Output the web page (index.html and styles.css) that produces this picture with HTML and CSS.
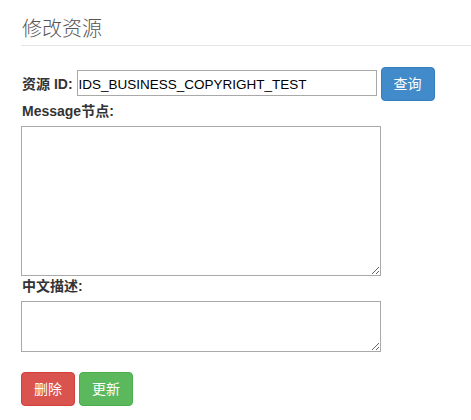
FILE: index.html
```html
<!DOCTYPE html>
<html lang="zh-CN">
<head>
<meta charset="utf-8">
<title>修改资源</title>
<link rel="stylesheet" href="styles.css">
</head>
<body>
<div class="page">
  <h3 class="page-title">修改资源</h3>
  <div class="query-row">
    <label class="inline-label" for="rid">资源 ID:</label>
    <input id="rid" class="id-input" type="text" value="IDS_BUSINESS_COPYRIGHT_TEST">
    <button class="btn btn-primary" type="button">查询</button>
  </div>
  <label class="block-label" for="msg">Message节点:</label>
  <textarea id="msg" class="area area-tall"></textarea>
  <label class="block-label serif-label" for="desc">中文描述:</label>
  <textarea id="desc" class="area area-short"></textarea>
  <div class="actions">
    <button class="btn btn-danger" type="button">删除</button>
    <button class="btn btn-success" type="button">更新</button>
  </div>
</div>
</body>
</html>
```

FILE: styles.css
```css
html, body {
  margin: 0;
  padding: 0;
  background: #fff;
}
body {
  font-family: "Liberation Sans", Arial, "Noto Sans CJK SC", sans-serif;
  font-size: 14px;
  line-height: 20px;
  color: #333;
}
.page {
  padding-left: 21px;
}
.page-title {
  margin: 0;
  padding: 17px 0 6px 1px;
  font-family: "Noto Sans CJK SC", sans-serif;
  font-size: 20px;
  line-height: 22px;
  font-weight: 300;
  color: #555;
  border-bottom: 1px solid #e5e5e5;
}
.query-row {
  display: flex;
  align-items: flex-start;
  margin-top: 21px;
  height: 34px;
}
.inline-label {
  font-weight: bold;
  margin: 7px 4px 0 1px;
  line-height: 20px;
}
.id-input {
  box-sizing: border-box;
  width: 300px;
  height: 26px;
  margin: 3px 4px 0 0;
  padding: 2px 1px 0 1px;
  border: 1px solid #a9a9a9;
  font-family: "Liberation Sans", Arial, sans-serif;
  font-size: 13.5px;
  color: #000;
  outline: none;
}
.btn {
  box-sizing: border-box;
  height: 34px;
  padding: 6px 12px;
  border: 1px solid transparent;
  border-radius: 4px;
  font-family: "Liberation Sans", Arial, "Noto Sans CJK SC", sans-serif;
  font-size: 14px;
  line-height: 20px;
  color: #fff;
  cursor: pointer;
}
.btn-primary {
  background: #428bca;
  border-color: #357ebd;
}
.btn-danger {
  background: #d9534f;
  border-color: #d43f3a;
}
.btn-success {
  background: #5cb85c;
  border-color: #4cae4c;
}
.block-label {
  display: block;
  font-weight: bold;
  margin: 0 0 5px 1px;
  line-height: 20px;
}
.area {
  display: block;
  box-sizing: border-box;
  width: 360px;
  margin: 0;
  padding: 2px;
  border: 1px solid #a9a9a9;
  font-family: "Liberation Mono", monospace;
  font-size: 13px;
  resize: both;
  outline: none;
}
.area-tall {
  height: 150px;
}
.area-short {
  height: 51px;
}
.actions {
  display: flex;
  gap: 4px;
  margin-top: 20px;
}
```
